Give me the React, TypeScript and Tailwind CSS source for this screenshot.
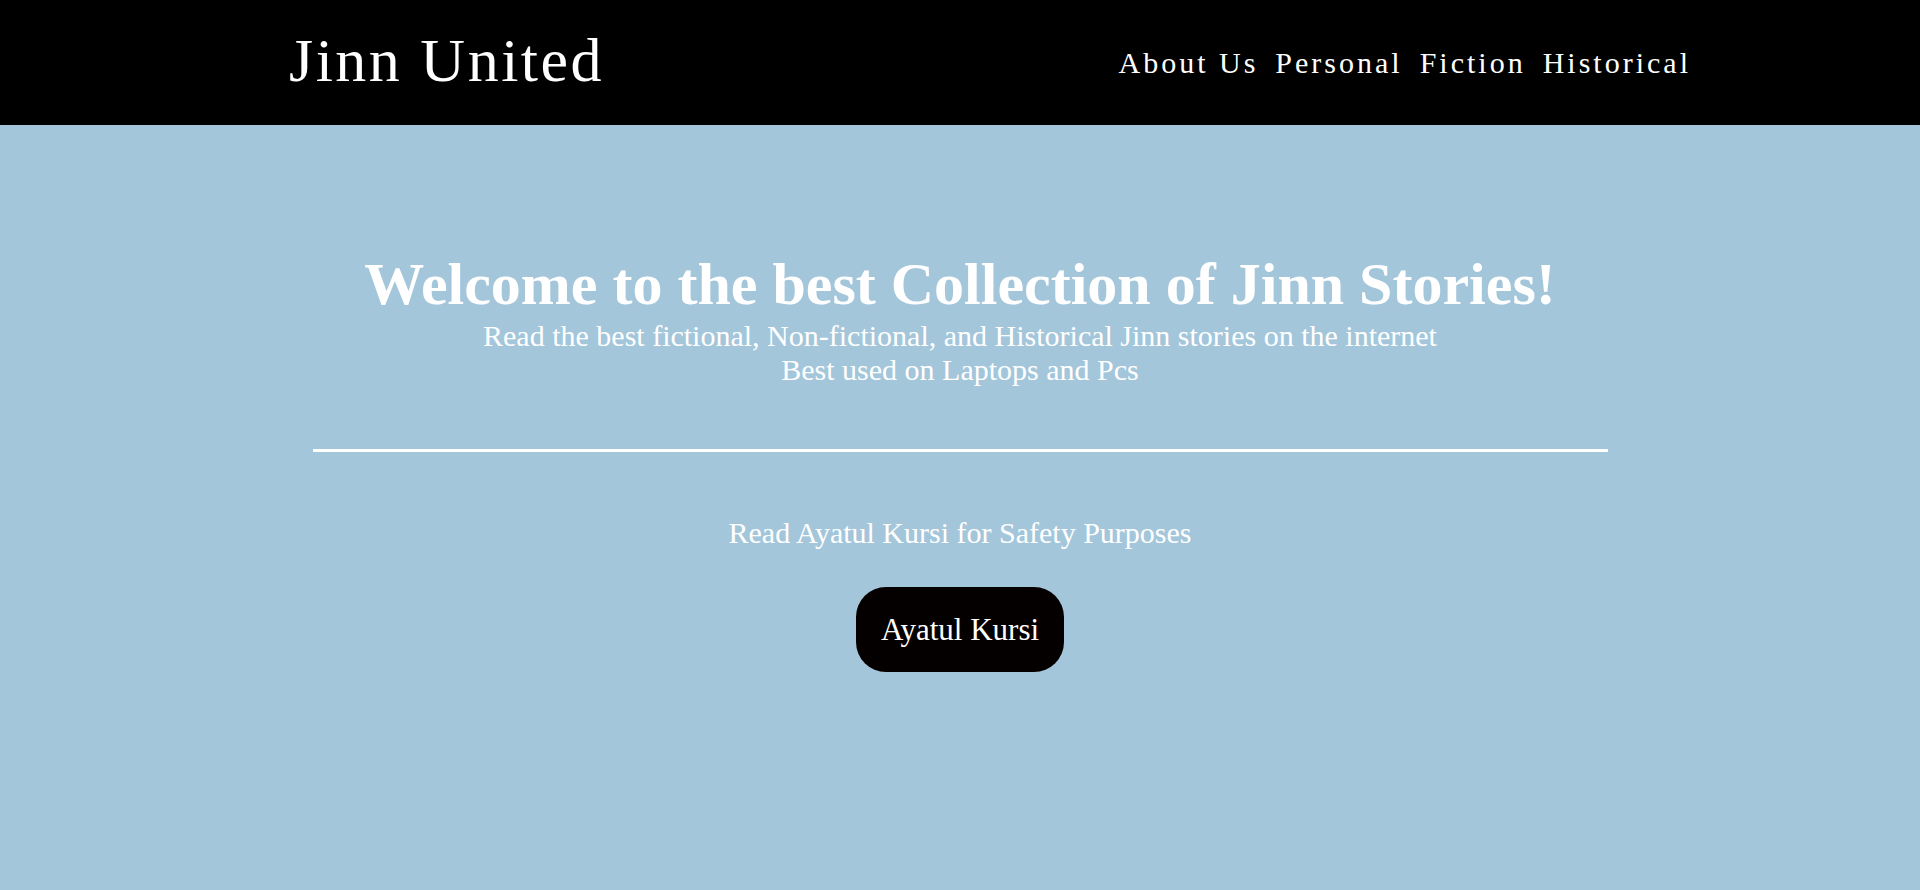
import React from "react";

export default function App() {
  const serif = { fontFamily: '"Liberation Serif", "Times New Roman", serif' };
  return (
    <div className="min-h-[890px] w-full bg-[#a3c6db] text-white" style={serif}>
      <header className="flex h-[125px] items-center justify-between bg-black pl-[289px] pr-[229px]">
        <div className="text-[62px] leading-[normal] tracking-[2.5px] -mt-[4px]">Jinn United</div>
        <nav className="flex items-center gap-[17px] text-[30px] leading-[normal] tracking-[3px]">
          <a>About Us</a>
          <a>Personal</a>
          <a>Fiction</a>
          <a>Historical</a>
        </nav>
      </header>
      <main className="flex flex-col items-center pt-[125px] text-center">
        <h1 className="text-[60px] font-bold leading-[normal]">Welcome to the best Collection of Jinn Stories!</h1>
        <p className="text-[30px] leading-[normal]">Read the best fictional, Non-fictional, and Historical Jinn stories on the internet</p>
        <p className="text-[30px] leading-[normal]">Best used on Laptops and Pcs</p>
        <div className="mt-[62px] h-[3px] w-[1295px] bg-white" />
        <p className="mt-[64px] text-[30px] leading-[normal]">Read Ayatul Kursi for Safety Purposes</p>
        <button className="mt-[37px] rounded-[30px] bg-[#050000] px-[25px] py-[25px] text-[31px] leading-[35px] text-white">
          Ayatul Kursi
        </button>
      </main>
    </div>
  );
}
